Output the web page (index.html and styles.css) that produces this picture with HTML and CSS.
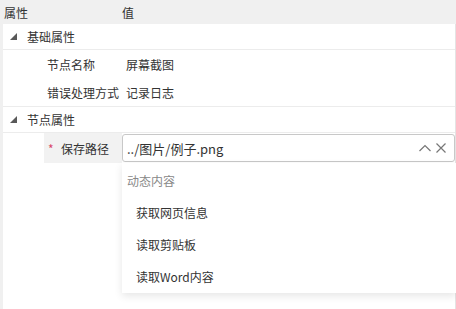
FILE: index.html
```html
<!DOCTYPE html>
<html lang="zh-CN">
<head>
  <meta charset="UTF-8" />
  <meta name="viewport" content="width=device-width, initial-scale=1.0" />
  <title>属性面板</title>
  <link rel="stylesheet" href="styles.css">
</head>
<body>
  <div class="grid">
    <div class="grid-head">
      <div class="col-name">属性</div>
      <div class="col-val">值</div>
    </div>
    <div class="grid-body">
      <div class="group">
        <div class="group-title">
          <svg class="caret" width="8" height="8" viewBox="0 0 8 8"><polygon points="7,0 7,7 0,7" fill="#595959"/></svg>
          基础属性
        </div>
        <div class="props">
          <div class="prop">
            <div class="prop-name">节点名称</div>
            <div class="prop-val">屏幕截图</div>
          </div>
          <div class="prop">
            <div class="prop-name">错误处理方式</div>
            <div class="prop-val">记录日志</div>
          </div>
        </div>
      </div>
      <div class="group last">
        <div class="group-title">
          <svg class="caret" width="8" height="8" viewBox="0 0 8 8"><polygon points="7,0 7,7 0,7" fill="#595959"/></svg>
          节点属性
        </div>
        <div class="props">
          <div class="prop edit">
            <div class="prop-name active"><span class="req">*</span>保存路径</div>
            <div class="prop-val">
              <div class="select">
                <span class="select-text">../图片/例子.png</span>
                <svg class="icon" width="14" height="10" viewBox="0 0 14 10"><polyline points="1.5,8 7,2.5 12.5,8" fill="none" stroke="#777" stroke-width="1.2"/></svg>
                <svg class="icon" width="12" height="12" viewBox="0 0 12 12"><path d="M1.5 1.5 L10.5 10.5 M10.5 1.5 L1.5 10.5" stroke="#777" stroke-width="1.2"/></svg>
              </div>
              <div class="dropdown">
                <div class="dropdown-title">动态内容</div>
                <div class="dropdown-item">获取网页信息</div>
                <div class="dropdown-item">读取剪贴板</div>
                <div class="dropdown-item">读取Word内容</div>
              </div>
            </div>
          </div>
        </div>
      </div>
    </div>
  </div>
</body>
</html>
```

FILE: styles.css
```css
body {
  margin: 0;
  font-family: "Noto Sans CJK SC", "Noto Sans", sans-serif;
  font-size: 12px;
  color: #333;
  background: #fff;
}
.grid {
  width: 456px;
  height: 309px;
  display: flex;
  flex-direction: column;
}
.grid-head {
  height: 24px;
  display: flex;
  align-items: center;
  background: #f0f0f0;
}
.col-name {
  width: 118px;
  padding-left: 4px;
}
.col-val {
  flex: 1;
}
.grid-body {
  flex: 1;
  border-left: 3px solid #f0f0f0;
  border-right: 1px solid #e4e4e4;
}
.group {
  border-bottom: 1px solid #ececec;
}
.group.last {
  border-bottom: none;
}
.group-title {
  height: 25px;
  display: flex;
  align-items: center;
  gap: 9px;
  padding-left: 7px;
  border-bottom: 1px solid #ececec;
}
.caret {
  margin-top: 1px;
}
.prop {
  height: 28px;
  display: flex;
  align-items: center;
}
.prop-name {
  width: 75px;
  margin-left: 41px;
  padding-left: 3px;
  white-space: nowrap;
}
.prop-val {
  flex: 1;
  padding-left: 4px;
}
.prop.edit {
  height: 30px;
  align-items: stretch;
}
.prop-name.active {
  background: #f2f2f2;
  display: flex;
  align-items: center;
  padding-left: 4px;
  width: 74px;
}
.req {
  color: #d9486b;
  font-size: 12px;
  width: 13px;
}
.edit .prop-val {
  padding-left: 0;
  position: relative;
  padding-top: 1px;
}
.select {
  height: 26px;
  border: 1px solid #c8c8c8;
  border-radius: 3px;
  display: flex;
  align-items: center;
  padding: 0 7px 0 4px;
  gap: 3px;
  font-size: 13px;
}
.select-text {
  flex: 1;
}
.icon {
  display: block;
}
.dropdown {
  position: absolute;
  top: 30px;
  left: 0;
  right: -1px;
  background: #fff;
  box-shadow: 0 3px 8px rgba(0, 0, 0, 0.1);
  padding-top: 2px;
}
.dropdown-title {
  height: 32px;
  line-height: 32px;
  padding-left: 5px;
  color: #888;
}
.dropdown-item {
  height: 32px;
  line-height: 32px;
  padding-left: 14px;
}
```
